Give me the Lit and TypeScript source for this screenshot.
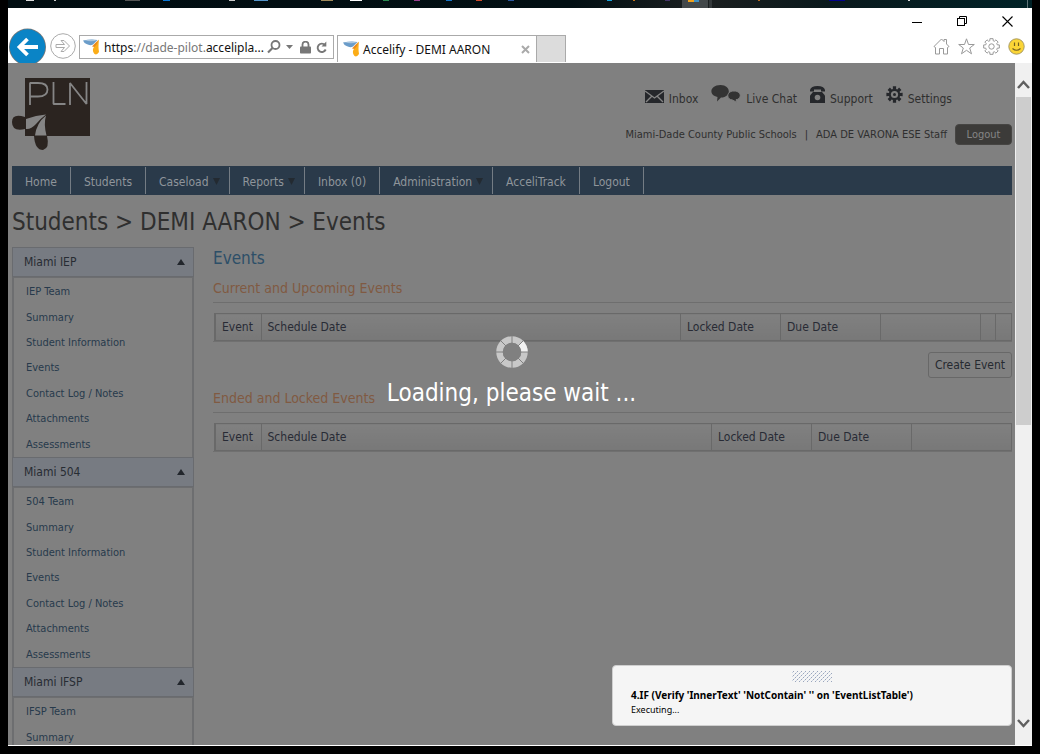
import { LitElement, html, svg, css } from "lit";
import { customElement } from "lit/decorators.js";

interface Section { title: string; items: string[]; }

const COMMON = ["Summary", "Student Information", "Events", "Contact Log / Notes", "Attachments", "Assessments"];
const SECTIONS: Section[] = [
  { title: "Miami IEP", items: ["IEP Team", ...COMMON] },
  { title: "Miami 504", items: ["504 Team", ...COMMON] },
  { title: "Miami IFSP", items: ["IFSP Team", "Summary"] },
];
const MENU = [
  { label: "Home" }, { label: "Students" }, { label: "Caseload", sub: true }, { label: "Reports", sub: true },
  { label: "Inbox (0)" }, { label: "Administration", sub: true }, { label: "AcceliTrack" }, { label: "Logout" },
];

const brand = html`<svg class="brand" width="17" height="16" viewBox="0 0 17 16" aria-hidden="true">
  <path d="M0 1.500Q8 0 14.500 1Q12 3.500 10 5.500Q7 7 3.500 5Q1 4 0 1.500Z" fill="#6a9cc9"/>
  <path d="M1.500 1.500Q8 .3 14 1.200Q9 3 1.500 1.500Z" fill="#a9c5de"/>
  <path d="M16 .5Q15 8 16 13Q14 16.500 11.500 15Q9.500 13.500 10 10Q11.500 6 16 .5Z" fill="#fbad18"/>
  <path d="M15.500 1Q12 4 9 7.500L11.500 8Q14.500 5 15.500 1Z" fill="#e98a1c"/></svg>`;

const gearTeeth = (r1: number, r2: number, n = 8) => {
  const pts: string[] = [];
  for (let i = 0; i < n; i++) {
    const a = (i * 2 * Math.PI) / n;
    for (const [da, r] of [[-0.28, r1], [-0.2, r2], [0.2, r2], [0.28, r1]] as number[][]) {
      pts.push(`${(r * Math.sin(a + da)).toFixed(2)},${(-r * Math.cos(a + da)).toFixed(2)}`);
    }
  }
  return pts.join(" ");
};

@customElement("app-root")
export class AppRoot extends LitElement {
  static styles = css`
    :host { display: block; font-family: "DejaVu Sans Condensed", "DejaVu Sans", sans-serif; font-size: 11px; color: #2f2f2f; }
    * { box-sizing: border-box; }
    button { font: inherit; color: inherit; border: 0; background: none; padding: 0; display: flex; align-items: center; justify-content: center; }
    a { color: inherit; text-decoration: none; }
    svg { display: block; flex: none; }
    h1, h2, h3, ul, p { margin: 0; padding: 0; font-weight: normal; }
    ul { list-style: none; }
    .desktop { height: 100vh; background: #000; padding: 0 8px 8px; display: flex; flex-direction: column; overflow: hidden; }
    .taskbar { height: 8px; background: linear-gradient(90deg, #010d11, #020f13 55%, #1b1f20 68%, #0a191c 80%, #002227); flex: none; overflow: hidden; }
    .window { flex: 1; min-height: 0; background: #fff; display: flex; flex-direction: column; padding-bottom: 1px; }

    .chrome { height: 55px; flex: none; display: flex; justify-content: space-between; font-family: "Noto Sans", "Open Sans", sans-serif; font-size: 12px; color: #111; overflow: hidden; }
    .bar { display: flex; align-items: flex-start; padding-top: 27px; }
    .back { margin-top: -7px; }
    .forward { margin: -2px 3px 0 4px; }
    .address { width: 255px; height: 24px; border: 1px solid #aaa; display: flex; align-items: center; padding: 0 5px 0 3px; gap: 4px; }
    .url { flex: 1; min-width: 0; white-space: nowrap; color: #777; }
    .url b { font-weight: normal; color: #111; }
    .tools { display: flex; align-items: center; gap: 5px; }
    .tools .lock { margin-left: 2px; }
    .tab { margin-left: 3px; width: 200px; height: 27px; border: 1px solid #aaa; border-bottom: 0; display: flex; align-items: center; padding: 0 6px 0 5px; gap: 3px; }
    .tab span { flex: 1; white-space: nowrap; }
    .newtab { width: 29px; height: 27px; background: #dcdcdc; border: 1px solid #aaa; border-width: 1px 1px 0 0; }
    .controls { padding: 8px 7px 0 0; display: flex; flex-direction: column; align-items: flex-end; gap: 11px; }
    .winbtns { display: flex; gap: 34px; padding-right: 12px; }
    .cmds { display: flex; gap: 8px; }

    .client { flex: 1; min-height: 0; display: flex; }
    .page { position: relative; flex: 1; min-width: 0; background: #808080; overflow: hidden; }
    .scroll { width: 17px; background: #f0f0f0; display: flex; flex-direction: column; align-items: center; padding: 17px 0; }
    .thumb { width: 15px; height: 328px; background: #cdcdcd; margin: 8px 0 auto; }
    .content { padding: 0 3px 0 4px; }

    .head { height: 103px; display: flex; justify-content: space-between; padding-top: 15px; }
    .account { display: flex; flex-direction: column; align-items: flex-end; gap: 15px; padding-top: 6px; }
    .quick { display: flex; padding-right: 60px; gap: 13px; font-size: 12px; }
    .quick a { display: flex; align-items: flex-end; gap: 5px; height: 25px; line-height: 19px; }
    .quick svg { margin-bottom: 6px; }
    .who { display: flex; align-items: center; gap: 8px; white-space: nowrap; }
    .logout { width: 57px; height: 21px; background: #3c3b39; color: #858585; border-radius: 4px; border: 1px solid #464543; }

    .menu { height: 29px; background: #2a3a4a; display: flex; padding: 1px 0; color: #8f959b; font-size: 12px; }
    .menu a { display: flex; align-items: center; gap: 4px; padding: 2px 13px 0; border-right: 1px solid #747c84; white-space: nowrap; }
    .menu a.sub { padding-right: 9px; }
    .crumb { font-size: 24px; line-height: 32px; padding: 11px 0 9px; }

    .cols { display: flex; gap: 19px; }
    .side { width: 182px; flex: none; }
    .acc { width: 100%; height: 30px; border: 1px solid #696b6f; background: #777b82; display: flex; justify-content: space-between; padding: 0 8px 0 11px; font-size: 12px; color: #272c33; }
    .list { height: 180px; display: grid; grid-template-rows: repeat(7, 1fr); border: 2px solid #6d6e70; border-width: 1px 2px 0; align-items: center; padding: 1px 0 0 12px; color: #273a4c; }
    .main { flex: 1; min-width: 0; }
    .main h2 { font-size: 17px; line-height: 22px; color: #2d4f68; }
    .main h3 { font-size: 14px; line-height: 28px; color: #805a42; border-bottom: 1px solid #6e6e6e; margin: 5px 0 10px; }
    table { width: 100%; border-collapse: collapse; table-layout: fixed; font-size: 12px; color: #282b35; }
    th { height: 27px; padding: 0 6px; text-align: left; font-weight: normal; border: 1px solid #696969; background: linear-gradient(#808080, #787878); white-space: nowrap; }
    th:first-child { border-left-width: 2px; }
    .grid { border-bottom: 1px solid #707070; padding-left: 1px; }
    .c-event { width: 46px; }
    .c-date { width: 100px; }
    .c-icon { width: 15px; }
    .c-end { width: 16px; }
    .actions { display: flex; justify-content: flex-end; padding: 10px 0 1px; }
    .create { width: 84px; height: 26px; border: 1px solid #686868; border-radius: 3px; font-size: 12px; color: #262a30; white-space: nowrap; }

    .overlay { position: absolute; inset: 0; display: flex; flex-direction: column; align-items: center; padding-top: 273px; gap: 10px; color: #fff; font-size: 24px; line-height: 30px; }
    .toast { position: absolute; right: 3px; bottom: 19px; width: 400px; height: 61px; background: #f5f5f5; border: 1px solid #cfcfcf; border-radius: 4px; padding: 5px 18px; color: #000; font-family: "Noto Sans", "Open Sans", sans-serif; font-size: 9px; line-height: 13px; }
    .toast svg { margin: 0 auto 5px; }
    .toast strong { display: block; font-size: 10px; line-height: 16px; }
  `;

  private taskbar() {
    const bits: [number, number, string][] = [[18, 8, "#ddd"], [46, 2, "#ccc"], [117, 15, "#555"], [155, 7, "#0a78d7"], [221, 6, "#ccc"], [246, 14, "#5596cc"], [313, 12, "#a08a5c"], [342, 12, "#fff"], [375, 6, "#2a8b50"], [406, 6, "#9b3f91"], [438, 6, "#1675c8"], [468, 6, "#cf4b2c"], [500, 6, "#2c58a0"], [599, 5, "#18a3dc"], [625, 2, "#c2741b"], [657, 5, "#46356a"], [750, 2, "#b56a1f"], [821, 16, "#00008a"], [900, 2, "#ddd"]];
    return html`<svg width="1024" height="8" aria-hidden="true">
      <rect x="674" width="26" height="8" fill="#43484a"/><rect x="701" width="3" height="8" fill="#33383a"/>
      <rect x="680" width="6" height="2" fill="#f0a11c"/><rect x="686" width="5" height="2" fill="#3d8fc4"/>
      ${bits.map(([x, w, c]) => svg`<rect x=${x} width=${w} height="1" fill=${c}/>`)}
      <rect x="1019" width="1" height="8" fill="#5f7478"/></svg>`;
  }

  private chrome() {
    return html`<header class="chrome">
      <div class="bar">
        <button class="back" aria-label="Back"><svg width="38" height="38" viewBox="0 0 38 38">
          <circle cx="19.500" cy="19" r="18.500" fill="#777"/><circle cx="19.500" cy="19" r="17.700" fill="#0a84c6"/>
          <path d="M11 19H30M19.500 11L11.500 19L19.500 27" fill="none" stroke="#fff" stroke-width="3.800"/></svg></button>
        <button class="forward" aria-label="Forward"><svg width="26" height="26" viewBox="0 0 26 26" fill="none" stroke="#aaa">
          <circle cx="13" cy="13" r="12.300"/><path d="M6 11.500H14.500L11 7.500H14L19.500 13L14 18.500H11L14.500 14.500H6Z"/></svg></button>
        <div class="address">${brand}<span class="url"><b>https</b>://dade-pilot.<b>accelipla...</b></span>
          <div class="tools">
            <svg width="14" height="14" viewBox="0 0 14 14" fill="none" stroke="#777"><circle cx="8.500" cy="5" r="4" stroke-width="1.800"/><path d="M5.500 8L1 12.500" stroke-width="2.200"/></svg>
            <svg width="7" height="4"><path d="M0 0H7L3.500 4Z" fill="#777"/></svg>
            <svg class="lock" width="11" height="13" viewBox="0 0 11 13"><path d="M2.500 6V3.500a3 2.800 0 0 1 6 0V6" fill="none" stroke="#777" stroke-width="1.800"/><rect y="5.500" width="11" height="7" rx=".8" fill="#777"/></svg>
            <svg width="12" height="13" viewBox="0 0 12 13"><path d="M9 4A4.200 4.200 0 1 0 9.700 8.500" fill="none" stroke="#777" stroke-width="1.900"/><path d="M10.300 .5V5.500H5.500Z" fill="#777"/></svg>
          </div></div>
        <div class="tab">${brand}<span>Accelify - DEMI AARON</span>
          <button aria-label="Close tab"><svg width="9" height="9" viewBox="0 0 9 9"><path d="M1 1L8 8M8 1L1 8" stroke="#aaa" stroke-width="2"/></svg></button></div>
        <button class="newtab" aria-label="New tab"></button>
      </div>
      <div class="controls">
        <div class="winbtns">
          <button aria-label="Minimize"><svg width="11" height="11"><path d="M0 6.500H10" stroke="#000"/></svg></button>
          <button aria-label="Restore"><svg width="11" height="11" fill="none" stroke="#000"><rect x=".5" y="2.500" width="7" height="7"/><path d="M2.500 2.500V.5H9.500V7.500H7.500"/></svg></button>
          <button aria-label="Close"><svg width="11" height="11"><path d="M.5 .5L10.500 10.500M10.500 .5L.5 10.500" stroke="#000" stroke-width="1.100"/></svg></button>
        </div>
        <div class="cmds">
          <button aria-label="Home"><svg width="17" height="17" viewBox="0 0 17 17" fill="none" stroke="#999"><path d="M2.500 9.500L1 8.500L8.500 1L11 3.500V1.500H13.500V6L16 8.500L14.500 9.500V16H10.500V10.500H6.500V16H2.500Z"/></svg></button>
          <button aria-label="Favorites"><svg width="17" height="17" viewBox="0 0 17 17" fill="none" stroke="#999"><path d="M8.500 .8L10.500 6.500H16.300L11.700 10L13.500 15.800L8.500 12.300L3.500 15.800L5.300 10L.7 6.500H6.500Z"/></svg></button>
          <button aria-label="Tools"><svg width="17" height="17" viewBox="-8.500 -8.500 17 17" fill="none" stroke="#999"><polygon points=${gearTeeth(6, 8)} stroke-linejoin="round"/><circle r="2.700"/></svg></button>
          <button aria-label="Send a smile"><svg width="17" height="17" viewBox="0 0 17 17"><circle cx="8.500" cy="8.500" r="7.700" fill="#fbd536" stroke="#a89a60"/><path d="M6.500 4.500V8M10.500 4.500V8M4.500 10.500Q8.500 14 12.500 10.500" fill="none" stroke="#74601f" stroke-width="1.200"/></svg></button>
        </div>
      </div>
    </header>`;
  }

  private pageHead() {
    return html`<div class="head">
      <svg width="79" height="74" viewBox="0 0 79 74" role="img" aria-label="PLN">
        <rect x="13" y="0" width="65" height="58" fill="#2b2420"/>
        <path d="M18 27V5H26Q35.500 5 35.500 11.500Q35.500 18.500 26 18.500H18M41.500 4V26H53.500M58 27V5L74.500 26V4" fill="none" stroke="#858585" stroke-width="1.800" stroke-linejoin="bevel"/>
        <path d="M13 39Q0 35 0 44Q0 54 13 51Z" fill="#2b2420"/>
        <path d="M22 58Q23 72 31 72Q38 70 35 58Z" fill="#2b2420"/>
        <path d="M34 36.500Q24 37 14 41V51Q19 51.500 24 46Q28 41 34 36.500Z" fill="#858585"/>
        <path d="M34 37.500Q24.500 45 23 57.500H34.500Q31.500 46 34 37.500Z" fill="#858585"/></svg>
      <div class="account">
        <nav class="quick">
          <a href="#"><svg width="19" height="13" viewBox="0 0 19 13"><rect width="19" height="13" fill="#25272b"/><path d="M0 1L9.500 8L19 1M1 12L7 6M18 12L12 6" fill="none" stroke="#858585" stroke-width="1.400"/></svg>Inbox</a>
          <a href="#"><svg width="30" height="18" viewBox="0 0 30 18" fill="#333"><path d="M9.500 0C20 0 21 12 10 12.500L6 16.500L6.500 12C-3 10 -1 0 9.500 0Z"/><path d="M23 6C31 6 31 14 25 14.800L26 17.500L21.500 15C15 14.500 15 6 23 6Z" stroke="#808080"/></svg>Live Chat</a>
          <a href="#"><svg width="15" height="17" viewBox="0 0 15 17"><path d="M0 4Q1 0 7.500 0Q14 0 15 4V5.500H11V3.500H4V5.500H0Z" fill="#25272b"/><path d="M3 6H12L15 9.500V17H0V9.500Z" fill="#25272b"/><circle cx="7.500" cy="11.500" r="2.800" fill="#808080"/></svg>Support</a>
          <a href="#"><svg width="17" height="17" viewBox="-8.500 -8.500 17 17"><polygon points=${gearTeeth(5.800, 8.300)} fill="#25272b"/><circle r="3.600" fill="#808080"/><circle r="1.500" fill="#25272b"/></svg>Settings</a>
        </nav>
        <div class="who"><span>Miami-Dade County Public Schools</span><span>|</span><span>ADA DE VARONA ESE Staff</span><button class="logout">Logout</button></div>
      </div>
    </div>`;
  }

  private table(label: string, extra: string[]) {
    return html`<div class="grid"><table aria-label=${label}>
      <colgroup><col class="c-event"><col><col class="c-date"><col class="c-date">${extra.map(c => html`<col class=${c}>`)}</colgroup>
      <thead><tr><th>Event</th><th>Schedule Date</th><th>Locked Date</th><th>Due Date</th>${extra.map(() => html`<th></th>`)}</tr></thead>
    </table></div>`;
  }

  render() {
    return html`<div class="desktop">
      <div class="taskbar">${this.taskbar()}</div>
      <div class="window">
        ${this.chrome()}
        <div class="client">
          <div class="page">
            <div class="content">
              ${this.pageHead()}
              <nav class="menu">${MENU.map(m => html`<a href="#" class=${m.sub ? "sub" : ""}>${m.label}${m.sub ? html`<svg width="7" height="7"><path d="M0 0H7L3.500 7Z" fill="#232a31"/></svg>` : ""}</a>`)}</nav>
              <h1 class="crumb">Students &gt; DEMI AARON &gt; Events</h1>
              <div class="cols">
                <aside class="side">${SECTIONS.map(s => html`
                  <button class="acc" aria-expanded="true">${s.title}<svg width="8" height="6"><path d="M4 0L8 6H0Z" fill="#22262c"/></svg></button>
                  <ul class="list">${s.items.map(i => html`<li><a href="#">${i}</a></li>`)}</ul>`)}</aside>
                <main class="main">
                  <h2>Events</h2>
                  <h3>Current and Upcoming Events</h3>
                  ${this.table("Current and Upcoming Events", ["c-date", "c-icon", "c-end"])}
                  <div class="actions"><button class="create">Create Event</button></div>
                  <h3>Ended and Locked Events</h3>
                  ${this.table("Ended and Locked Events", ["c-date"])}
                </main>
              </div>
            </div>
            <div class="overlay" role="status">
              <svg width="32" height="32" viewBox="-16 -16 32 32"><circle r="12.500" fill="none" stroke="#c8c8c8" stroke-width="6.500"/>
                <path d="M11.100 -11.100A15.700 15.700 0 0 1 15.700 0H9.300A9.300 9.300 0 0 0 6.600 -6.600Z" fill="#f2f2f2"/>
                <path d="M0 -16V16M-16 0H16M-11.500 -11.500L11.500 11.500M11.500 -11.500L-11.500 11.500" stroke="#808080"/><circle r="9.200" fill="#808080"/></svg>
              <span>Loading, please wait ...</span>
            </div>
            <div class="toast" role="status">
              <svg width="40" height="11" aria-hidden="true"><defs><pattern id="grip" width="4" height="4" patternUnits="userSpaceOnUse"><rect x="1" y="0" width="1" height="1" fill="#9aa6bd"/><rect x="3" y="2" width="1" height="1" fill="#9aa6bd"/><rect x="0" y="1" width="1" height="1" fill="#ccd4e2"/><rect x="2" y="3" width="1" height="1" fill="#ccd4e2"/></pattern></defs><rect width="40" height="11" fill="url(#grip)"/></svg>
              <strong>4.IF (Verify 'InnerText' 'NotContain' '' on 'EventListTable')</strong>
              <p>Executing...</p>
            </div>
          </div>
          <div class="scroll">
            <svg width="13" height="9"><path d="M1 8L6.500 2L12 8" fill="none" stroke="#606060" stroke-width="2.500"/></svg>
            <div class="thumb"></div>
            <svg width="13" height="9"><path d="M1 1L6.500 7L12 1" fill="none" stroke="#606060" stroke-width="2.500"/></svg>
          </div>
        </div>
      </div>
    </div>`;
  }
}
